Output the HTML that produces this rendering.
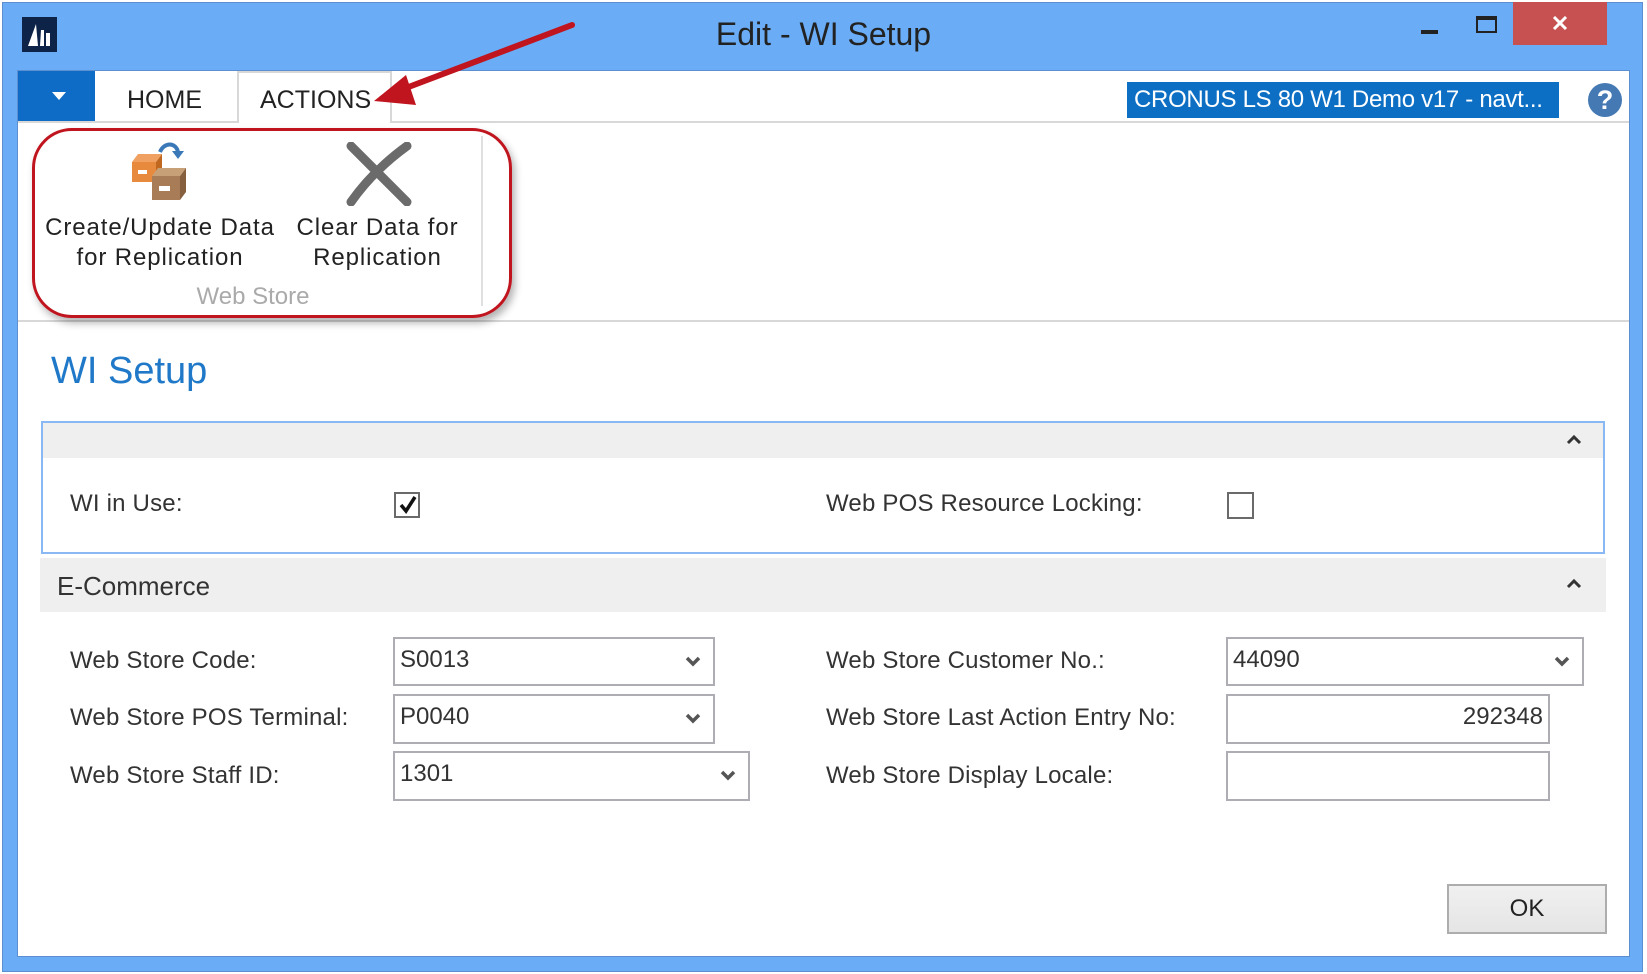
<!DOCTYPE html>
<html><head><meta charset="utf-8"><style>
*{margin:0;padding:0;box-sizing:border-box}
body{width:1647px;height:974px;background:#fff;position:relative;overflow:hidden;font-family:"Liberation Sans",sans-serif;color:#222}
.a{position:absolute}
.lbl{position:absolute;font-size:24px;color:#333;white-space:nowrap;letter-spacing:0.2px}
.inp{position:absolute;border:2px solid #adadb3;background:#fff;font-size:24px;color:#333;padding-left:5px;line-height:42px}
.chev{position:absolute;right:12px;top:16px}
</style></head><body>
<div class="a" style="left:2px;top:2px;width:1641px;height:970px;background:#6aacf5;border:1px solid #5b8fd0"></div>
<div class="a" style="left:17px;top:70px;width:1613px;height:887px;background:#fff;border:1px solid #5b8fd0"></div>
<div class="a" style="left:22px;top:17px;width:35px;height:35px;background:#0d2348"></div>
<svg class="a" style="left:22px;top:17px" width="35" height="35"><path d="M6 29 L14 7 L16 29Z M18 29 L19 13 L22 13 L22 29Z M24 29 L24 16 L28 16 L28 29Z" fill="#fff"/></svg>
<div class="a" style="left:0;width:1647px;top:16px;text-align:center;font-size:32px;color:#222">Edit - WI Setup</div>
<div class="a" style="left:1421px;top:30px;width:17px;height:4px;background:#222"></div>
<div class="a" style="left:1476px;top:16px;width:21px;height:17px;border:2px solid #222;border-top-width:4px"></div>
<div class="a" style="left:1513px;top:2px;width:94px;height:43px;background:#c75050"></div>
<svg class="a" style="left:1552px;top:16px" width="16" height="14"><path d="M2 1 L14 13 M14 1 L2 13" stroke="#fff" stroke-width="3"/></svg>
<div class="a" style="left:18px;top:71px;width:77px;height:50px;background:#0f6cc6"></div>
<svg class="a" style="left:50px;top:92px" width="18" height="10"><path d="M2 0 L16 0 L9 8Z" fill="#fff"/></svg>
<div class="a" style="left:127px;top:86px;font-size:25px;color:#222">HOME</div>
<div class="a" style="left:237px;top:71px;width:155px;height:52px;border:2px solid #d8d8d8;border-bottom:none;background:#fff"></div>
<div class="a" style="left:18px;top:121px;width:219px;height:2px;background:#d8d8d8"></div>
<div class="a" style="left:392px;top:121px;width:1237px;height:2px;background:#d8d8d8"></div>
<div class="a" style="left:260px;top:86px;font-size:25px;color:#222">ACTIONS</div>
<div class="a" style="left:1127px;top:82px;width:432px;height:36px;background:#0d6fc4;color:#fff;font-size:24px;line-height:36px;padding-left:7px;white-space:nowrap;overflow:hidden;letter-spacing:-0.3px">CRONUS LS 80 W1 Demo v17 - navt...</div>
<div class="a" style="left:1588px;top:83px;width:34px;height:34px;border-radius:50%;background:#4479b4;color:#fff;font-size:27px;font-weight:bold;text-align:center;line-height:34px">?</div>
<div class="a" style="left:18px;top:320px;width:1611px;height:2px;background:#d8d8d8"></div>
<div class="a" style="left:481px;top:136px;width:2px;height:170px;background:#e0e0e0"></div>
<svg class="a" style="left:128px;top:138px" width="70" height="66">
<path d="M32 14 C36 4 48 4 50 14" stroke="#3a78b8" stroke-width="4" fill="none"/><path d="M44 13 L56 13 L50 21Z" fill="#3a78b8"/>
<path d="M4 24 L10 16 L34 16 L28 24Z" fill="#f0a060"/><rect x="4" y="24" width="24" height="20" fill="#e88a3e"/><path d="M28 24 L34 16 L34 36 L28 44Z" fill="#c06820"/><rect x="10" y="32" width="9" height="4" fill="#fff"/>
<path d="M24 38 L30 30 L58 30 L52 38Z" fill="#c8a078"/><rect x="24" y="38" width="28" height="24" fill="#a87c56"/><path d="M52 38 L58 30 L58 54 L52 62Z" fill="#86603e"/><rect x="31" y="48" width="11" height="5" fill="#fff"/>
</svg>
<svg class="a" style="left:345px;top:142px" width="68" height="64"><path d="M6 4 L62 60 M62 4 C40 20 20 40 6 60" stroke="#6b6b6b" stroke-width="9" stroke-linecap="round" fill="none"/></svg>
<div class="a" style="left:30px;top:213px;width:260px;text-align:center;font-size:24px;line-height:30px;color:#222;letter-spacing:0.9px">Create/Update Data<br>for Replication</div>
<div class="a" style="left:280px;top:213px;width:195px;text-align:center;font-size:24px;line-height:30px;color:#222;letter-spacing:0.9px">Clear Data for<br>Replication</div>
<div class="a" style="left:160px;top:283px;width:186px;text-align:center;font-size:24px;color:#aaa">Web Store</div>
<div class="a" style="left:32px;top:128px;width:480px;height:190px;border:3px solid #c0141e;border-radius:40px;box-shadow:3px 5px 8px rgba(0,0,0,.3)"></div>
<svg class="a" style="left:360px;top:15px" width="230" height="100"><path d="M212 10 L38 76" stroke="#c0141e" stroke-width="6" stroke-linecap="round"/><path d="M14 86 L46 60 L56 90Z" fill="#c0141e"/></svg>
<div class="a" style="left:51px;top:350px;font-size:38px;color:#1f79c8">WI Setup</div>
<div class="a" style="left:41px;top:421px;width:1564px;height:133px;border:2px solid #8ab8f4;background:#fff"></div>
<div class="a" style="left:43px;top:423px;width:1560px;height:35px;background:#efefef"></div>
<svg class="a" style="left:1566px;top:434px" width="16" height="12"><path d="M2 9 L8 3 L14 9" stroke="#333" stroke-width="3" fill="none"/></svg>
<div class="lbl" style="left:70px;top:490px">WI in Use:</div>
<div class="a" style="left:394px;top:492px;width:26px;height:26px;border:2px solid #6a6a6a"></div>
<svg class="a" style="left:397px;top:494px" width="22" height="22"><path d="M4 11 L9 17 L18 3" stroke="#111" stroke-width="3.5" fill="none"/></svg>
<div class="lbl" style="left:826px;top:490px">Web POS Resource Locking:</div>
<div class="a" style="left:1227px;top:492px;width:27px;height:27px;border:2px solid #6a6a6a"></div>
<div class="a" style="left:40px;top:558px;width:1566px;height:54px;background:#efefef"></div>
<div class="a" style="left:57px;top:571px;font-size:26px;color:#333">E-Commerce</div>
<svg class="a" style="left:1566px;top:578px" width="16" height="12"><path d="M2 9 L8 3 L14 9" stroke="#333" stroke-width="3" fill="none"/></svg>
<div class="lbl" style="left:70px;top:647px">Web Store Code:</div>
<div class="lbl" style="left:70px;top:704px">Web Store POS Terminal:</div>
<div class="lbl" style="left:70px;top:762px">Web Store Staff ID:</div>
<div class="inp" style="left:393px;top:637px;width:322px;height:49px">S0013<svg class="chev" width="16" height="12"><path d="M2 3 L8 9 L14 3" stroke="#555" stroke-width="3.5" fill="none"/></svg></div>
<div class="inp" style="left:393px;top:694px;width:322px;height:50px">P0040<svg class="chev" width="16" height="12"><path d="M2 3 L8 9 L14 3" stroke="#555" stroke-width="3.5" fill="none"/></svg></div>
<div class="inp" style="left:393px;top:751px;width:357px;height:50px">1301<svg class="chev" width="16" height="12"><path d="M2 3 L8 9 L14 3" stroke="#555" stroke-width="3.5" fill="none"/></svg></div>
<div class="lbl" style="left:826px;top:647px">Web Store Customer No.:</div>
<div class="lbl" style="left:826px;top:704px">Web Store Last Action Entry No:</div>
<div class="lbl" style="left:826px;top:762px">Web Store Display Locale:</div>
<div class="inp" style="left:1226px;top:637px;width:358px;height:49px">44090<svg class="chev" width="16" height="12"><path d="M2 3 L8 9 L14 3" stroke="#555" stroke-width="3.5" fill="none"/></svg></div>
<div class="inp" style="left:1226px;top:694px;width:324px;height:50px;text-align:right;padding-right:5px">292348</div>
<div class="inp" style="left:1226px;top:751px;width:324px;height:50px"></div>
<div class="a" style="left:1447px;top:884px;width:160px;height:50px;border:2px solid #adadad;background:linear-gradient(#f0f0f0,#e5e5e5);text-align:center;line-height:46px;font-size:24px;color:#222">OK</div>
</body></html>
